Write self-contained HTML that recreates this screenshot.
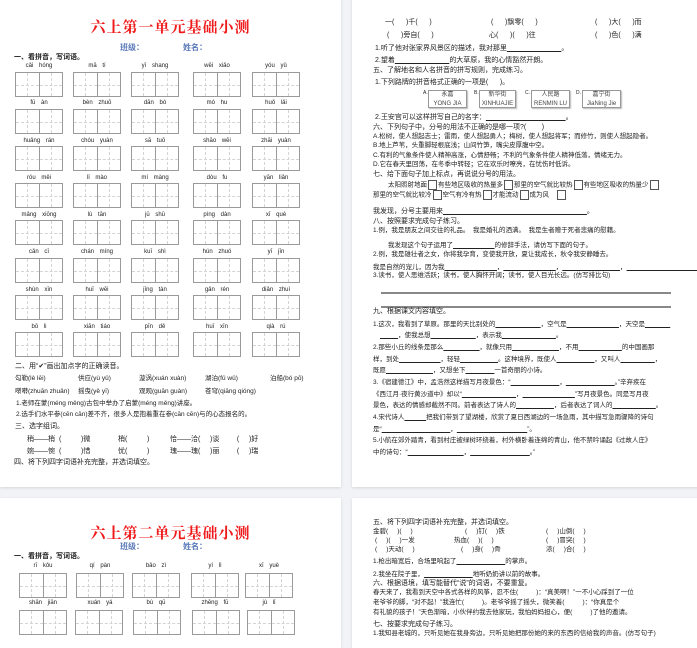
<!DOCTYPE html>
<html><head><meta charset="utf-8">
<style>
*{margin:0;padding:0;box-sizing:border-box}
body{width:697px;height:635px;background:#f2f3f6;position:relative;overflow:hidden;font-family:"Liberation Sans","Noto Sans CJK SC",sans-serif;color:#222}
.pg{position:absolute;background:#fff;box-shadow:0 1px 3px rgba(0,0,0,.12);overflow:hidden}
.t{position:absolute;white-space:nowrap;font-size:7px;line-height:8px;color:#222}
.b{font-weight:bold}
.ti{position:absolute;left:0;width:341px;text-align:center;font-family:"Liberation Serif","Noto Serif CJK SC",serif;font-weight:bold;color:#f01818;font-size:15px;letter-spacing:1px}
.cls{position:absolute;font-size:8px;color:#5878b8;font-weight:bold;white-space:nowrap}
.g{position:absolute;width:48px;height:25px;border:1px solid #9a9a9a;display:flex}
.g i{position:relative;flex:1;border-right:1px solid #9a9a9a}
.g i:last-child{border-right:none}
.g i::before{content:"";position:absolute;left:0;right:0;top:50%;border-top:1px dashed #d4d4d4}
.g i::after{content:"";position:absolute;top:0;bottom:0;left:50%;border-left:1px dashed #d4d4d4}
.py{position:absolute;font-size:6px;width:48px;text-align:center;white-space:nowrap;color:#222;word-spacing:4px}
.ln{position:absolute;height:1px;background:#777}
.bx{position:absolute;border:1px solid #999;box-shadow:1px 1px 1px #bbb;font-size:6px;text-align:center;line-height:9px;color:#444;background:#fff}
.sq{display:inline-block;width:9px;height:10px;border:1px solid #555;vertical-align:middle;margin:0 1px}
</style></head><body>

<!-- PAGE 1 -->
<div class="pg" style="left:0;top:-4px;width:341px;height:491px">
<div style="position:relative;top:4px">
<div class="ti" style="top:16px">六上第一单元基础小测</div>
<div class="cls" style="left:120px;top:42px">班级：</div>
<div class="cls" style="left:183px;top:42px">姓名：</div>
<div class="t b" style="left:14px;top:54px">一、看拼音，写词语。</div>

<div class="py" style="left:15px;top:63px">cǎi hóng</div><div class="py" style="left:73px;top:63px">mā tí</div><div class="py" style="left:131px;top:63px">yī shang</div><div class="py" style="left:193px;top:63px">wēi xiǎo</div><div class="py" style="left:252px;top:63px">yóu yǔ</div>
<div class="g" style="left:15px;top:72px"><i></i><i></i></div><div class="g" style="left:73px;top:72px"><i></i><i></i></div><div class="g" style="left:131px;top:72px"><i></i><i></i></div><div class="g" style="left:193px;top:72px"><i></i><i></i></div><div class="g" style="left:252px;top:72px"><i></i><i></i></div>

<div class="py" style="left:15px;top:100px">fū àn</div><div class="py" style="left:73px;top:100px">bèn zhuō</div><div class="py" style="left:131px;top:100px">dān bó</div><div class="py" style="left:193px;top:100px">mó hu</div><div class="py" style="left:252px;top:100px">huǒ lǎi</div>
<div class="g" style="left:15px;top:109px"><i></i><i></i></div><div class="g" style="left:73px;top:109px"><i></i><i></i></div><div class="g" style="left:131px;top:109px"><i></i><i></i></div><div class="g" style="left:193px;top:109px"><i></i><i></i></div><div class="g" style="left:252px;top:109px"><i></i><i></i></div>

<div class="py" style="left:15px;top:138px">huǎng rán</div><div class="py" style="left:73px;top:138px">chóu yuàn</div><div class="py" style="left:131px;top:138px">sā tuō</div><div class="py" style="left:193px;top:138px">shāo wēi</div><div class="py" style="left:252px;top:138px">zhāi yuàn</div>
<div class="g" style="left:15px;top:146px"><i></i><i></i></div><div class="g" style="left:73px;top:146px"><i></i><i></i></div><div class="g" style="left:131px;top:146px"><i></i><i></i></div><div class="g" style="left:193px;top:146px"><i></i><i></i></div><div class="g" style="left:252px;top:146px"><i></i><i></i></div>

<div class="py" style="left:15px;top:175px">róu měi</div><div class="py" style="left:73px;top:175px">lǐ mào</div><div class="py" style="left:131px;top:175px">mí màng</div><div class="py" style="left:193px;top:175px">dòu fu</div><div class="py" style="left:252px;top:175px">yān liǎn</div>
<div class="g" style="left:15px;top:183px"><i></i><i></i></div><div class="g" style="left:73px;top:183px"><i></i><i></i></div><div class="g" style="left:131px;top:183px"><i></i><i></i></div><div class="g" style="left:193px;top:183px"><i></i><i></i></div><div class="g" style="left:252px;top:183px"><i></i><i></i></div>

<div class="py" style="left:15px;top:212px">mǎng xiōng</div><div class="py" style="left:73px;top:212px">lù tān</div><div class="py" style="left:131px;top:212px">jū shū</div><div class="py" style="left:193px;top:212px">píng dàn</div><div class="py" style="left:252px;top:212px">xī què</div>
<div class="g" style="left:15px;top:220px"><i></i><i></i></div><div class="g" style="left:73px;top:220px"><i></i><i></i></div><div class="g" style="left:131px;top:220px"><i></i><i></i></div><div class="g" style="left:193px;top:220px"><i></i><i></i></div><div class="g" style="left:252px;top:220px"><i></i><i></i></div>

<div class="py" style="left:15px;top:249px">cǎn cī</div><div class="py" style="left:73px;top:249px">chán míng</div><div class="py" style="left:131px;top:249px">kuī shì</div><div class="py" style="left:193px;top:249px">hún zhuó</div><div class="py" style="left:252px;top:249px">yī jīn</div>
<div class="g" style="left:15px;top:258px"><i></i><i></i></div><div class="g" style="left:73px;top:258px"><i></i><i></i></div><div class="g" style="left:131px;top:258px"><i></i><i></i></div><div class="g" style="left:193px;top:258px"><i></i><i></i></div><div class="g" style="left:252px;top:258px"><i></i><i></i></div>

<div class="py" style="left:15px;top:287px">shùn xīn</div><div class="py" style="left:73px;top:287px">huī wēi</div><div class="py" style="left:131px;top:287px">jīng tàn</div><div class="py" style="left:193px;top:287px">gǎn rén</div><div class="py" style="left:252px;top:287px">diǎn zhuì</div>
<div class="g" style="left:15px;top:295px"><i></i><i></i></div><div class="g" style="left:73px;top:295px"><i></i><i></i></div><div class="g" style="left:131px;top:295px"><i></i><i></i></div><div class="g" style="left:193px;top:295px"><i></i><i></i></div><div class="g" style="left:252px;top:295px"><i></i><i></i></div>

<div class="py" style="left:15px;top:324px">bō li</div><div class="py" style="left:73px;top:324px">xiān tiáo</div><div class="py" style="left:131px;top:324px">pīn dě</div><div class="py" style="left:193px;top:324px">huī xīn</div><div class="py" style="left:252px;top:324px">qià rú</div>
<div class="g" style="left:15px;top:332px"><i></i><i></i></div><div class="g" style="left:73px;top:332px"><i></i><i></i></div><div class="g" style="left:131px;top:332px"><i></i><i></i></div><div class="g" style="left:193px;top:332px"><i></i><i></i></div><div class="g" style="left:252px;top:332px"><i></i><i></i></div>

<div class="t" style="left:15px;top:363px">二、用“✔”画出加点字的正确读音。</div>
<div class="t" style="left:15px;top:375px;font-size:6.5px">勾勒(lè lēi)</div><div class="t" style="left:78px;top:375px;font-size:6.5px">供应(yù yǔ)</div><div class="t" style="left:139px;top:375px;font-size:6.5px">漩涡(xuán xuàn)</div><div class="t" style="left:205px;top:375px;font-size:6.5px">湖泊(fǔ wǔ)</div><div class="t" style="left:270px;top:375px;font-size:6.5px">泊船(bó pō)</div>
<div class="t" style="left:15px;top:388px;font-size:6.5px">啭啭(zhuān zhuǎn)</div><div class="t" style="left:78px;top:388px;font-size:6.5px">摇曳(yě yī)</div><div class="t" style="left:139px;top:388px;font-size:6.5px">观观(guān guàn)</div><div class="t" style="left:205px;top:388px;font-size:6.5px">苍穹(qiāng qióng)</div>
<div class="t" style="left:16px;top:400px;font-size:6.5px">1.老师在蒙(méng měng)古包中举办了启蒙(méng měng)讲座。</div>
<div class="t" style="left:16px;top:411px;font-size:6.5px">2.选手们水平参(cēn cān)差不齐，很多人是抱着重在参(cān cēn)与的心态报名的。</div>
<div class="t" style="left:15px;top:423px">三、选字组词。</div>
<div class="t" style="left:27px;top:436px;word-spacing:2px">稍——梢 (&nbsp;&nbsp;&nbsp;&nbsp;&nbsp;)微&nbsp;&nbsp;&nbsp;&nbsp;&nbsp;&nbsp;&nbsp;梢(&nbsp;&nbsp;&nbsp;&nbsp;&nbsp;)</div>
<div class="t" style="left:170px;top:436px">恰——洽(&nbsp;&nbsp;&nbsp;&nbsp;&nbsp;)谈&nbsp;&nbsp;&nbsp;&nbsp;&nbsp;&nbsp;&nbsp;&nbsp;&nbsp;(&nbsp;&nbsp;&nbsp;&nbsp;&nbsp;)好</div>
<div class="t" style="left:27px;top:448px;word-spacing:2px">婉——惋 (&nbsp;&nbsp;&nbsp;&nbsp;&nbsp;)惜&nbsp;&nbsp;&nbsp;&nbsp;&nbsp;&nbsp;&nbsp;忧(&nbsp;&nbsp;&nbsp;&nbsp;&nbsp;)</div>
<div class="t" style="left:170px;top:448px">瑰——瑰(&nbsp;&nbsp;&nbsp;&nbsp;&nbsp;)丽&nbsp;&nbsp;&nbsp;&nbsp;&nbsp;&nbsp;&nbsp;&nbsp;&nbsp;(&nbsp;&nbsp;&nbsp;&nbsp;&nbsp;)瑞</div>
<div class="t" style="left:14px;top:459px">四、将下列四字词语补充完整，并选词填空。</div>
</div></div>

<!-- PAGE 2 -->
<div class="pg" style="left:352px;top:-4px;width:350px;height:491px">
<div style="position:relative;top:4px;left:-352px">
<div class="t" style="left:385px;top:19px">一(&nbsp;&nbsp;&nbsp;&nbsp;&nbsp;&nbsp;)千(&nbsp;&nbsp;&nbsp;&nbsp;&nbsp;&nbsp;)</div>
<div class="t" style="left:491px;top:19px">(&nbsp;&nbsp;&nbsp;&nbsp;&nbsp;&nbsp;)飘零(&nbsp;&nbsp;&nbsp;&nbsp;&nbsp;&nbsp;)</div>
<div class="t" style="left:595px;top:19px">(&nbsp;&nbsp;&nbsp;&nbsp;&nbsp;&nbsp;)大(&nbsp;&nbsp;&nbsp;&nbsp;&nbsp;&nbsp;)而</div>
<div class="t" style="left:387px;top:32px">(&nbsp;&nbsp;&nbsp;&nbsp;&nbsp;&nbsp;)旁自(&nbsp;&nbsp;&nbsp;&nbsp;&nbsp;&nbsp;)</div>
<div class="t" style="left:489px;top:32px">心(&nbsp;&nbsp;&nbsp;&nbsp;&nbsp;&nbsp;)(&nbsp;&nbsp;&nbsp;&nbsp;&nbsp;&nbsp;)往</div>
<div class="t" style="left:595px;top:32px">(&nbsp;&nbsp;&nbsp;&nbsp;&nbsp;&nbsp;)色(&nbsp;&nbsp;&nbsp;&nbsp;&nbsp;&nbsp;)满</div>
<div class="t" style="left:375px;top:45px">1.听了他对张家界风景区的描述，我对那里<u>&nbsp;&nbsp;&nbsp;&nbsp;&nbsp;&nbsp;&nbsp;&nbsp;&nbsp;&nbsp;&nbsp;&nbsp;&nbsp;&nbsp;&nbsp;&nbsp;&nbsp;&nbsp;&nbsp;&nbsp;&nbsp;&nbsp;&nbsp;&nbsp;&nbsp;&nbsp;&nbsp;&nbsp;</u>。</div>
<div class="t" style="left:375px;top:57px">2.望着<u>&nbsp;&nbsp;&nbsp;&nbsp;&nbsp;&nbsp;&nbsp;&nbsp;&nbsp;&nbsp;&nbsp;&nbsp;&nbsp;&nbsp;&nbsp;&nbsp;&nbsp;&nbsp;&nbsp;&nbsp;&nbsp;&nbsp;&nbsp;&nbsp;&nbsp;&nbsp;&nbsp;&nbsp;</u>的大草原，我的心情豁然开朗。</div>
<div class="t" style="left:373px;top:67px">五、了解地名和人名拼音的拼写规则，完成练习。</div>
<div class="t" style="left:375px;top:79px">1.下列路牌的拼音格式正确的一项是(&nbsp;&nbsp;&nbsp;&nbsp;&nbsp;&nbsp;)。</div>
<div class="t" style="left:423px;top:89px;font-size:5px">A.</div><div class="bx" style="left:428px;top:90px;width:39px;height:18px">永嘉<br>YONG JIA</div>
<div class="t" style="left:474px;top:89px;font-size:5px">B.</div><div class="bx" style="left:479px;top:90px;width:37px;height:18px">新华街<br>XINHUAJIE</div>
<div class="t" style="left:525px;top:89px;font-size:5px">C.</div><div class="bx" style="left:531px;top:90px;width:39px;height:18px">人民路<br>RENMIN LU</div>
<div class="t" style="left:576px;top:89px;font-size:5px">D.</div><div class="bx" style="left:582px;top:90px;width:39px;height:18px">嘉宁街<br>JiaNing Jie</div>
<div class="t" style="left:375px;top:114px">2.王安宫可以这样拼写自己的名字：<u>&nbsp;&nbsp;&nbsp;&nbsp;&nbsp;&nbsp;&nbsp;&nbsp;&nbsp;&nbsp;&nbsp;&nbsp;&nbsp;&nbsp;&nbsp;&nbsp;&nbsp;&nbsp;&nbsp;&nbsp;&nbsp;&nbsp;&nbsp;&nbsp;&nbsp;&nbsp;&nbsp;&nbsp;&nbsp;&nbsp;&nbsp;&nbsp;&nbsp;&nbsp;&nbsp;&nbsp;&nbsp;&nbsp;&nbsp;&nbsp;&nbsp;</u>。</div>
<div class="t" style="left:373px;top:124px">六、下列句子中，分号的用法不正确的是哪一项?(&nbsp;&nbsp;&nbsp;&nbsp;&nbsp;&nbsp;&nbsp;&nbsp;)</div>
<div class="t" style="left:373px;top:133px;font-size:6.5px">A.松树，使人想起志士；雷雨，使人想起勇人；梅树，使人想起将军；而修竹，则使人想起隐者。</div>
<div class="t" style="left:373px;top:142px;font-size:6.5px">B.地上芦苇，头重脚轻根底浅；山间竹笋，嘴尖皮厚腹中空。</div>
<div class="t" style="left:373px;top:152px;font-size:6.5px">C.有利的气象条件使人精神高涨，心情舒畅；不利的气象条件使人精神低落，情绪无力。</div>
<div class="t" style="left:373px;top:161px;font-size:6.5px">D.它在春天里回荡，在冬季中转轻；它在欢乐时嘹亮，在忧伤时低诉。</div>
<div class="t" style="left:373px;top:171px">七、给下面句子加上标点，再说说分号的用法。</div>
<div class="t" style="left:388px;top:180px;font-size:6.5px">太阳照射地面<span class="sq"></span>有些地区吸收的热量多<span class="sq"></span>那里的空气就比较热<span class="sq"></span>有些地区吸收的热量少<span class="sq"></span></div>
<div class="t" style="left:373px;top:190px;font-size:6.5px">那里的空气就比较冷<span class="sq"></span>空气有冷有热<span class="sq"></span>才能流动<span class="sq"></span>成为风&nbsp;&nbsp;&nbsp;&nbsp;<span class="sq"></span></div>
<div class="t" style="left:373px;top:208px">我发现，分号主要用来<u>&nbsp;&nbsp;&nbsp;&nbsp;&nbsp;&nbsp;&nbsp;&nbsp;&nbsp;&nbsp;&nbsp;&nbsp;&nbsp;&nbsp;&nbsp;&nbsp;&nbsp;&nbsp;&nbsp;&nbsp;&nbsp;&nbsp;&nbsp;&nbsp;&nbsp;&nbsp;&nbsp;&nbsp;&nbsp;&nbsp;&nbsp;&nbsp;&nbsp;&nbsp;&nbsp;&nbsp;&nbsp;&nbsp;&nbsp;&nbsp;&nbsp;&nbsp;&nbsp;&nbsp;&nbsp;&nbsp;&nbsp;&nbsp;&nbsp;&nbsp;&nbsp;&nbsp;&nbsp;&nbsp;&nbsp;&nbsp;&nbsp;&nbsp;&nbsp;&nbsp;&nbsp;&nbsp;&nbsp;&nbsp;&nbsp;&nbsp;&nbsp;&nbsp;&nbsp;&nbsp;&nbsp;&nbsp;&nbsp;&nbsp;</u>。</div>
<div class="t" style="left:373px;top:218px">八、按照要求完成句子练习。</div>
<div class="t" style="left:373px;top:227px;font-size:6.5px">1.例，我是朋友之间交往的礼品。&nbsp;&nbsp;我是婚礼的洒满。&nbsp;&nbsp;我是生者赠于死者悲痛的慰藉。</div>
<div class="t" style="left:388px;top:242px;font-size:6.5px">我发现这个句子运用了<u>&nbsp;&nbsp;&nbsp;&nbsp;&nbsp;&nbsp;&nbsp;&nbsp;&nbsp;&nbsp;&nbsp;&nbsp;&nbsp;&nbsp;&nbsp;&nbsp;&nbsp;&nbsp;&nbsp;&nbsp;&nbsp;&nbsp;&nbsp;</u>的修辞手法，请仿写下面的句子。</div>
<div class="t" style="left:373px;top:251px;font-size:6.5px">2.例，我是雄壮者之女，你将我孕育，变使我开放，夏让我成长，秋令我安静睡去。</div>
<div class="t" style="left:373px;top:264px;font-size:6.5px">我是自然的宠儿，因为我<u>&nbsp;&nbsp;&nbsp;&nbsp;&nbsp;&nbsp;&nbsp;&nbsp;&nbsp;&nbsp;&nbsp;&nbsp;&nbsp;&nbsp;&nbsp;&nbsp;&nbsp;&nbsp;&nbsp;&nbsp;&nbsp;&nbsp;&nbsp;&nbsp;&nbsp;&nbsp;&nbsp;&nbsp;&nbsp;</u>，<u>&nbsp;&nbsp;&nbsp;&nbsp;&nbsp;&nbsp;&nbsp;&nbsp;&nbsp;&nbsp;&nbsp;&nbsp;&nbsp;&nbsp;&nbsp;&nbsp;&nbsp;&nbsp;&nbsp;&nbsp;&nbsp;&nbsp;&nbsp;&nbsp;&nbsp;&nbsp;&nbsp;&nbsp;&nbsp;</u>，<u>&nbsp;&nbsp;&nbsp;&nbsp;&nbsp;&nbsp;&nbsp;&nbsp;&nbsp;&nbsp;&nbsp;&nbsp;&nbsp;&nbsp;&nbsp;&nbsp;&nbsp;&nbsp;&nbsp;&nbsp;&nbsp;&nbsp;&nbsp;&nbsp;&nbsp;&nbsp;&nbsp;&nbsp;&nbsp;&nbsp;&nbsp;&nbsp;</u>，<u>&nbsp;&nbsp;&nbsp;&nbsp;&nbsp;&nbsp;&nbsp;&nbsp;&nbsp;&nbsp;&nbsp;&nbsp;&nbsp;&nbsp;&nbsp;&nbsp;&nbsp;&nbsp;&nbsp;&nbsp;&nbsp;&nbsp;&nbsp;&nbsp;&nbsp;&nbsp;&nbsp;&nbsp;&nbsp;&nbsp;&nbsp;&nbsp;&nbsp;&nbsp;&nbsp;&nbsp;&nbsp;&nbsp;&nbsp;</u>。</div>
<div class="t" style="left:373px;top:272px;font-size:6.5px">3.读书，使人思维活跃；读书，使人胸怀开阔；读书，使人目光长远。(仿写排比句)</div>
<div class="ln" style="left:381px;top:292px;width:290px;height:2px;background:#888"></div>
<div class="ln" style="left:381px;top:306px;width:290px;height:2px;background:#888"></div>
<div class="t" style="left:373px;top:308px">九、根据课文内容填空。</div>
<div class="t" style="left:373px;top:321px;font-size:6.5px">1.这次，我看到了草原。那里的天比别处的<u>&nbsp;&nbsp;&nbsp;&nbsp;&nbsp;&nbsp;&nbsp;&nbsp;&nbsp;&nbsp;&nbsp;&nbsp;&nbsp;&nbsp;&nbsp;&nbsp;&nbsp;&nbsp;&nbsp;&nbsp;&nbsp;&nbsp;&nbsp;&nbsp;&nbsp;</u>，空气是<u>&nbsp;&nbsp;&nbsp;&nbsp;&nbsp;&nbsp;&nbsp;&nbsp;&nbsp;&nbsp;&nbsp;&nbsp;&nbsp;&nbsp;&nbsp;&nbsp;&nbsp;&nbsp;&nbsp;&nbsp;&nbsp;&nbsp;&nbsp;&nbsp;&nbsp;&nbsp;&nbsp;&nbsp;&nbsp;</u>，天空是<u>&nbsp;&nbsp;&nbsp;&nbsp;&nbsp;&nbsp;&nbsp;&nbsp;&nbsp;&nbsp;&nbsp;&nbsp;&nbsp;&nbsp;</u></div>
<div class="t" style="left:380px;top:332px;font-size:6.5px"><u>&nbsp;&nbsp;&nbsp;&nbsp;&nbsp;&nbsp;&nbsp;&nbsp;&nbsp;&nbsp;</u>，使我总想<u>&nbsp;&nbsp;&nbsp;&nbsp;&nbsp;&nbsp;&nbsp;&nbsp;&nbsp;&nbsp;&nbsp;&nbsp;&nbsp;&nbsp;&nbsp;&nbsp;&nbsp;&nbsp;&nbsp;&nbsp;&nbsp;&nbsp;&nbsp;&nbsp;&nbsp;</u>，表示我<u>&nbsp;&nbsp;&nbsp;&nbsp;&nbsp;&nbsp;&nbsp;&nbsp;&nbsp;&nbsp;&nbsp;&nbsp;&nbsp;&nbsp;&nbsp;&nbsp;&nbsp;&nbsp;&nbsp;&nbsp;&nbsp;&nbsp;&nbsp;&nbsp;&nbsp;&nbsp;&nbsp;&nbsp;&nbsp;&nbsp;</u>。</div>
<div class="t" style="left:373px;top:344px;font-size:6.5px">2.那些小丘的线条是那么<u>&nbsp;&nbsp;&nbsp;&nbsp;&nbsp;&nbsp;&nbsp;&nbsp;&nbsp;&nbsp;&nbsp;&nbsp;&nbsp;&nbsp;&nbsp;&nbsp;&nbsp;&nbsp;&nbsp;&nbsp;</u>，就像只用<u>&nbsp;&nbsp;&nbsp;&nbsp;&nbsp;&nbsp;&nbsp;&nbsp;&nbsp;&nbsp;&nbsp;&nbsp;&nbsp;&nbsp;&nbsp;&nbsp;&nbsp;&nbsp;&nbsp;&nbsp;&nbsp;&nbsp;&nbsp;&nbsp;&nbsp;&nbsp;</u>，不用<u>&nbsp;&nbsp;&nbsp;&nbsp;&nbsp;&nbsp;&nbsp;&nbsp;&nbsp;&nbsp;&nbsp;&nbsp;&nbsp;&nbsp;&nbsp;&nbsp;&nbsp;&nbsp;&nbsp;&nbsp;&nbsp;&nbsp;&nbsp;&nbsp;</u>的中国画那</div>
<div class="t" style="left:373px;top:356px;font-size:6.5px">样，到处<u>&nbsp;&nbsp;&nbsp;&nbsp;&nbsp;&nbsp;&nbsp;&nbsp;&nbsp;&nbsp;&nbsp;&nbsp;&nbsp;&nbsp;&nbsp;&nbsp;&nbsp;&nbsp;&nbsp;&nbsp;&nbsp;&nbsp;&nbsp;</u>，轻轻<u>&nbsp;&nbsp;&nbsp;&nbsp;&nbsp;&nbsp;&nbsp;&nbsp;&nbsp;&nbsp;&nbsp;&nbsp;&nbsp;&nbsp;&nbsp;&nbsp;&nbsp;&nbsp;&nbsp;&nbsp;&nbsp;</u>。这种境界，既使人<u>&nbsp;&nbsp;&nbsp;&nbsp;&nbsp;&nbsp;&nbsp;&nbsp;&nbsp;&nbsp;&nbsp;&nbsp;&nbsp;&nbsp;&nbsp;&nbsp;&nbsp;&nbsp;&nbsp;&nbsp;&nbsp;</u>，又叫人<u>&nbsp;&nbsp;&nbsp;&nbsp;&nbsp;&nbsp;&nbsp;&nbsp;&nbsp;&nbsp;&nbsp;&nbsp;&nbsp;&nbsp;&nbsp;&nbsp;&nbsp;&nbsp;&nbsp;</u>，</div>
<div class="t" style="left:373px;top:367px;font-size:6.5px">既愿<u>&nbsp;&nbsp;&nbsp;&nbsp;&nbsp;&nbsp;&nbsp;&nbsp;&nbsp;&nbsp;&nbsp;&nbsp;&nbsp;&nbsp;&nbsp;&nbsp;&nbsp;&nbsp;&nbsp;&nbsp;&nbsp;&nbsp;&nbsp;&nbsp;&nbsp;&nbsp;</u>，又想坐下<u>&nbsp;&nbsp;&nbsp;&nbsp;&nbsp;&nbsp;&nbsp;&nbsp;&nbsp;&nbsp;&nbsp;&nbsp;&nbsp;&nbsp;&nbsp;&nbsp;</u>一首奇丽的小诗。</div>
<div class="t" style="left:373px;top:379px;font-size:6.5px">3.《宿建德江》中，孟浩然这样描写月夜景色：“<u>&nbsp;&nbsp;&nbsp;&nbsp;&nbsp;&nbsp;&nbsp;&nbsp;&nbsp;&nbsp;&nbsp;&nbsp;&nbsp;&nbsp;&nbsp;&nbsp;&nbsp;&nbsp;&nbsp;&nbsp;&nbsp;&nbsp;&nbsp;&nbsp;&nbsp;&nbsp;&nbsp;</u>，<u>&nbsp;&nbsp;&nbsp;&nbsp;&nbsp;&nbsp;&nbsp;&nbsp;&nbsp;&nbsp;&nbsp;&nbsp;&nbsp;&nbsp;&nbsp;&nbsp;&nbsp;&nbsp;&nbsp;&nbsp;&nbsp;&nbsp;&nbsp;&nbsp;&nbsp;&nbsp;&nbsp;</u>。”辛弃疾在</div>
<div class="t" style="left:373px;top:391px;font-size:6.5px">《西江月·夜行黄沙道中》却以“<u>&nbsp;&nbsp;&nbsp;&nbsp;&nbsp;&nbsp;&nbsp;&nbsp;&nbsp;&nbsp;&nbsp;&nbsp;&nbsp;&nbsp;&nbsp;&nbsp;&nbsp;&nbsp;&nbsp;&nbsp;&nbsp;&nbsp;&nbsp;&nbsp;&nbsp;&nbsp;&nbsp;&nbsp;&nbsp;&nbsp;</u>，<u>&nbsp;&nbsp;&nbsp;&nbsp;&nbsp;&nbsp;&nbsp;&nbsp;&nbsp;&nbsp;&nbsp;&nbsp;&nbsp;&nbsp;&nbsp;&nbsp;&nbsp;&nbsp;&nbsp;&nbsp;&nbsp;&nbsp;&nbsp;&nbsp;&nbsp;&nbsp;&nbsp;&nbsp;&nbsp;</u>”写月夜景色。同是写月夜</div>
<div class="t" style="left:373px;top:402px;font-size:6.5px">景色，表达的情感却截然不同。前者表达了诗人的<u>&nbsp;&nbsp;&nbsp;&nbsp;&nbsp;&nbsp;&nbsp;&nbsp;&nbsp;&nbsp;&nbsp;&nbsp;&nbsp;&nbsp;&nbsp;&nbsp;&nbsp;&nbsp;&nbsp;&nbsp;&nbsp;</u>，后者表达了词人的<u>&nbsp;&nbsp;&nbsp;&nbsp;&nbsp;&nbsp;&nbsp;&nbsp;&nbsp;&nbsp;&nbsp;&nbsp;&nbsp;&nbsp;&nbsp;&nbsp;&nbsp;&nbsp;&nbsp;&nbsp;&nbsp;&nbsp;&nbsp;&nbsp;</u>。</div>
<div class="t" style="left:373px;top:414px;font-size:6.5px">4.宋代诗人<u>&nbsp;&nbsp;&nbsp;&nbsp;&nbsp;&nbsp;&nbsp;&nbsp;&nbsp;&nbsp;&nbsp;&nbsp;</u>把我们带到了望湖楼，欣赏了夏日西湖边的一场急雨，其中描写急雨骤降的诗句</div>
<div class="t" style="left:373px;top:426px;font-size:6.5px">是“<u>&nbsp;&nbsp;&nbsp;&nbsp;&nbsp;&nbsp;&nbsp;&nbsp;&nbsp;&nbsp;&nbsp;&nbsp;&nbsp;&nbsp;&nbsp;&nbsp;&nbsp;&nbsp;&nbsp;&nbsp;&nbsp;&nbsp;&nbsp;&nbsp;&nbsp;&nbsp;&nbsp;&nbsp;&nbsp;&nbsp;&nbsp;&nbsp;&nbsp;&nbsp;&nbsp;&nbsp;&nbsp;&nbsp;</u>，<u>&nbsp;&nbsp;&nbsp;&nbsp;&nbsp;&nbsp;&nbsp;&nbsp;&nbsp;&nbsp;&nbsp;&nbsp;&nbsp;&nbsp;&nbsp;&nbsp;&nbsp;&nbsp;&nbsp;&nbsp;&nbsp;&nbsp;&nbsp;&nbsp;&nbsp;&nbsp;&nbsp;&nbsp;&nbsp;&nbsp;&nbsp;&nbsp;&nbsp;&nbsp;&nbsp;&nbsp;&nbsp;&nbsp;&nbsp;</u>”。</div>
<div class="t" style="left:373px;top:437px;font-size:6.5px">5.小航在郊外踏青，看到村庄被绿树环绕着，村外横卧着连绵的青山，他不禁吟诵起《过故人庄》</div>
<div class="t" style="left:373px;top:449px;font-size:6.5px">中的诗句：“<u>&nbsp;&nbsp;&nbsp;&nbsp;&nbsp;&nbsp;&nbsp;&nbsp;&nbsp;&nbsp;&nbsp;&nbsp;&nbsp;&nbsp;&nbsp;&nbsp;&nbsp;&nbsp;&nbsp;&nbsp;&nbsp;&nbsp;&nbsp;&nbsp;&nbsp;&nbsp;&nbsp;&nbsp;&nbsp;&nbsp;&nbsp;</u>，<u>&nbsp;&nbsp;&nbsp;&nbsp;&nbsp;&nbsp;&nbsp;&nbsp;&nbsp;&nbsp;&nbsp;&nbsp;&nbsp;&nbsp;&nbsp;&nbsp;&nbsp;&nbsp;&nbsp;&nbsp;&nbsp;&nbsp;&nbsp;&nbsp;&nbsp;&nbsp;&nbsp;&nbsp;&nbsp;&nbsp;&nbsp;&nbsp;&nbsp;</u>。”</div>
</div></div>

<!-- PAGE 3 -->
<div class="pg" style="left:0;top:498px;width:341px;height:150px">
<div class="ti" style="top:24px">六上第二单元基础小测</div>
<div class="cls" style="left:120px;top:43px">班级：</div>
<div class="cls" style="left:183px;top:43px">姓名：</div>
<div class="t b" style="left:14px;top:55px">一、看拼音，写词语。</div>
<div class="py" style="left:19px;top:65px">rī kǒu</div><div class="py" style="left:76px;top:65px">qí pàn</div><div class="py" style="left:132px;top:65px">bǎo zì</div><div class="py" style="left:191px;top:65px">yí lì</div><div class="py" style="left:245px;top:65px">xī yuè</div>
<div class="g" style="left:19px;top:75px"><i></i><i></i></div><div class="g" style="left:76px;top:75px"><i></i><i></i></div><div class="g" style="left:132px;top:75px"><i></i><i></i></div><div class="g" style="left:191px;top:75px"><i></i><i></i></div><div class="g" style="left:245px;top:75px"><i></i><i></i></div>
<div class="py" style="left:19px;top:102px">shān jiān</div><div class="py" style="left:76px;top:102px">xuán yá</div><div class="py" style="left:132px;top:102px">bù qū</div><div class="py" style="left:191px;top:102px">zhēng fū</div><div class="py" style="left:245px;top:102px">jù lǐ</div>
<div class="g" style="left:19px;top:112px"><i></i><i></i></div><div class="g" style="left:75px;top:112px"><i></i><i></i></div><div class="g" style="left:133px;top:112px"><i></i><i></i></div><div class="g" style="left:192px;top:112px"><i></i><i></i></div><div class="g" style="left:247px;top:112px"><i></i><i></i></div>
</div>

<!-- PAGE 4 -->
<div class="pg" style="left:352px;top:498px;width:350px;height:150px">
<div style="position:relative;left:-352px;top:-498px">
<div class="t" style="left:373px;top:519px">五、将下列四字词语补充完整，并选词填空。</div>
<div class="t" style="left:373px;top:528px;font-size:6.5px">金碧(&nbsp;&nbsp;&nbsp;&nbsp;&nbsp;)(&nbsp;&nbsp;&nbsp;&nbsp;&nbsp;)</div><div class="t" style="left:465px;top:528px;font-size:6.5px">(&nbsp;&nbsp;&nbsp;&nbsp;&nbsp;)钉(&nbsp;&nbsp;&nbsp;&nbsp;&nbsp;)铁</div><div class="t" style="left:546px;top:528px;font-size:6.5px">(&nbsp;&nbsp;&nbsp;&nbsp;&nbsp;)山倒(&nbsp;&nbsp;&nbsp;&nbsp;&nbsp;)</div>
<div class="t" style="left:375px;top:537px;font-size:6.5px">(&nbsp;&nbsp;&nbsp;&nbsp;&nbsp;)(&nbsp;&nbsp;&nbsp;&nbsp;&nbsp;)一发</div><div class="t" style="left:454px;top:537px;font-size:6.5px">热血(&nbsp;&nbsp;&nbsp;&nbsp;&nbsp;)(&nbsp;&nbsp;&nbsp;&nbsp;&nbsp;)</div><div class="t" style="left:546px;top:537px;font-size:6.5px">(&nbsp;&nbsp;&nbsp;&nbsp;&nbsp;)冒突(&nbsp;&nbsp;&nbsp;&nbsp;&nbsp;)</div>
<div class="t" style="left:375px;top:546px;font-size:6.5px">(&nbsp;&nbsp;&nbsp;&nbsp;&nbsp;)天动(&nbsp;&nbsp;&nbsp;&nbsp;&nbsp;)</div><div class="t" style="left:461px;top:546px;font-size:6.5px">(&nbsp;&nbsp;&nbsp;&nbsp;&nbsp;)身(&nbsp;&nbsp;&nbsp;&nbsp;&nbsp;)骨</div><div class="t" style="left:546px;top:546px;font-size:6.5px">浓(&nbsp;&nbsp;&nbsp;&nbsp;&nbsp;)合(&nbsp;&nbsp;&nbsp;&nbsp;&nbsp;)</div>
<div class="t" style="left:373px;top:558px;font-size:6.5px">1.枪出暗宽后，合场里响起了<u>&nbsp;&nbsp;&nbsp;&nbsp;&nbsp;&nbsp;&nbsp;&nbsp;&nbsp;&nbsp;&nbsp;&nbsp;&nbsp;&nbsp;&nbsp;&nbsp;&nbsp;&nbsp;&nbsp;&nbsp;&nbsp;&nbsp;&nbsp;&nbsp;&nbsp;&nbsp;&nbsp;</u>的掌声。</div>
<div class="t" style="left:373px;top:571px;font-size:6.5px">2.我坐在院子里，<u>&nbsp;&nbsp;&nbsp;&nbsp;&nbsp;&nbsp;&nbsp;&nbsp;&nbsp;&nbsp;&nbsp;&nbsp;&nbsp;&nbsp;&nbsp;&nbsp;&nbsp;&nbsp;&nbsp;&nbsp;&nbsp;&nbsp;&nbsp;&nbsp;&nbsp;&nbsp;&nbsp;</u>地听奶奶讲以前的故事。</div>
<div class="t" style="left:373px;top:580px">六、根据语境，填写能替代“说”的词语，不要重复。</div>
<div class="t" style="left:373px;top:589px;font-size:6.5px">春天来了，我看到天空中各式各样的风筝，忍不住(&nbsp;&nbsp;&nbsp;&nbsp;&nbsp;&nbsp;&nbsp;&nbsp;&nbsp;&nbsp;)：“真美啊！”一不小心踩到了一位</div>
<div class="t" style="left:373px;top:599px;font-size:6.5px">老爷爷的脚，“对不起！”我连忙(&nbsp;&nbsp;&nbsp;&nbsp;&nbsp;&nbsp;&nbsp;&nbsp;&nbsp;&nbsp;)。老爷爷摇了摇头，微笑着(&nbsp;&nbsp;&nbsp;&nbsp;&nbsp;&nbsp;&nbsp;&nbsp;&nbsp;&nbsp;)：“你真是个</div>
<div class="t" style="left:373px;top:609px;font-size:6.5px">有礼貌的孩子！”天色渐暗，小伙伴约我去他家玩，我怕妈妈担心，便(&nbsp;&nbsp;&nbsp;&nbsp;&nbsp;&nbsp;&nbsp;&nbsp;&nbsp;&nbsp;)了他的邀请。</div>
<div class="t" style="left:373px;top:621px">七、按要求完成句子练习。</div>
<div class="t" style="left:373px;top:630px;font-size:6.5px">1.我知县老城的，只听见她在我身旁边，只听见她把那份她的来的东西的信给我的声音。(仿写句子)</div>
</div></div>
</body></html>
